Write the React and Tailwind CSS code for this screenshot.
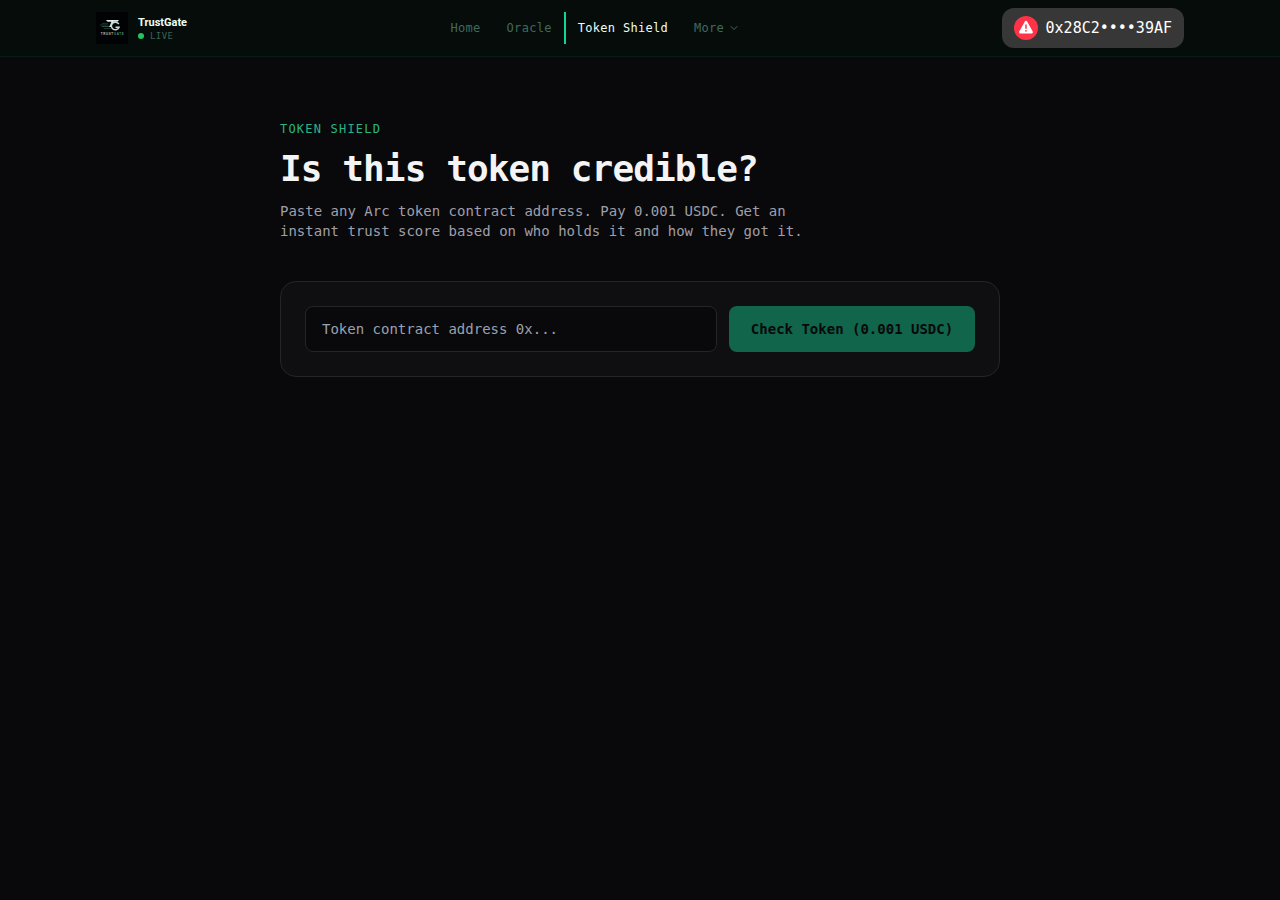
import { useState } from "react";
import { ChevronDown } from "lucide-react";

const NAV_ITEMS = ["Home", "Oracle", "Token Shield"];

function Logo() {
    return (
        <svg viewBox="0 0 32 32" className="w-8 h-8 shrink-0" aria-hidden="true">
            <rect width="32" height="32" fill="#010204" />
            {/* Speed lines */}
            <g stroke="#2f6e60" strokeWidth="0.8" fill="none">
                <path d="M6 11.500h6" opacity="0.5" />
                <path d="M4 13h8" opacity="0.7" />
                <path d="M6 14.500h8" opacity="0.9" />
                <path d="M8 16.500h7" opacity="0.6" />
            </g>
            {/* Monogram */}
            <path d="M10 8h13l-1.500 1.800h-4l-2.300 5.200h-2l2.300-5.200h-4z" fill="#dfe9e6" />
            <path
                d="M22.800 12a4 3.800 0 1 0 .3 3.300h-3.600"
                fill="none"
                stroke="#c9d8d3"
                strokeWidth="1.500"
            />
            <text
                x="16.500"
                y="23"
                textAnchor="middle"
                fontSize="3"
                fontWeight="700"
                letterSpacing="0.6"
                fontFamily="Liberation Sans, sans-serif"
                fill="#b4c4c0"
            >
                TRUST<tspan fill="#3d9c86">GATE</tspan>
            </text>
        </svg>
    );
}

function WalletIcon() {
    return (
        <svg viewBox="0 0 24 24" className="w-6 h-6 shrink-0" aria-hidden="true">
            <circle cx="12" cy="12" r="12" fill="#ff3347" />
            <path
                d="M12 6.200 17.600 16.200H6.400Z"
                fill="#fff"
                stroke="#fff"
                strokeWidth="2.600"
                strokeLinejoin="round"
            />
            <path d="M12 9v3.200" stroke="#ff3347" strokeWidth="1.500" strokeLinecap="round" />
            <circle cx="12" cy="14.800" r="0.9" fill="#ff3347" />
        </svg>
    );
}

function Navbar() {
    const [active, setActive] = useState("Token Shield");

    return (
        <header className="bg-[#050c0a] border-b border-[#051d17]">
            <div className="max-w-6xl h-14 mx-auto px-8 flex items-center justify-between">
                <a href="#home" className="flex items-center gap-[10px]">
                    <Logo />
                    <div className="flex flex-col">
                        <span className="font-['Roboto',sans-serif] text-[11px] leading-4 font-bold text-[#ecfdf5]">
                            TrustGate
                        </span>
                        <span className="flex items-center gap-[6px] text-[9px] leading-[10px] tracking-wider text-[#3c6354]">
                            <span className="w-[6px] h-[6px] rounded-full bg-[#22c55e]" />
                            LIVE
                        </span>
                    </div>
                </a>

                <nav className="flex items-center text-xs tracking-wide">
                    {NAV_ITEMS.map((item) => (
                        <a
                            key={item}
                            href="#"
                            onClick={() => setActive(item)}
                            className={`px-3 py-2 border-l-2 ${active === item
                                ? "border-[#10d49a] text-[#ecfdf5]"
                                : "border-transparent text-[#41695a]"
                                }`}
                        >
                            {item}
                        </a>
                    ))}
                    <button
                        type="button"
                        className="flex items-center gap-1 px-3 py-2 border-l-2 border-transparent tracking-wide text-[#41695a]"
                    >
                        More
                        <ChevronDown className="w-3 h-3" />
                    </button>
                </nav>

                <button
                    type="button"
                    className="h-10 px-3 flex items-center gap-2 rounded-xl bg-[#373737] text-[15px] text-white"
                >
                    <WalletIcon />
                    0x28C2••••39AF
                </button>
            </div>
        </header>
    );
}

export default function App() {
    const [address, setAddress] = useState("");

    return (
        <div className="min-h-screen bg-[#09090b] font-['DejaVu_Sans_Mono',monospace]">
            <Navbar />

            <main className="max-w-3xl mx-auto px-6 py-16">
                <p className="text-xs tracking-widest text-[#2ab584]">TOKEN SHIELD</p>
                <h1 className="mt-3 text-4xl font-bold tracking-tight text-[#f4f4f5]">
                    Is this token credible?
                </h1>
                <p className="mt-3 max-w-[560px] text-sm text-[#9f9fa9]">
                    Paste any Arc token contract address. Pay 0.001 USDC. Get an instant trust
                    score based on who holds it and how they got it.
                </p>

                <form
                    onSubmit={(e) => e.preventDefault()}
                    className="mt-10 p-6 flex gap-3 rounded-2xl border border-[#252528] bg-[#0f0f11]"
                >
                    <input
                        type="text"
                        aria-label="Token contract address"
                        value={address}
                        onChange={(e) => setAddress(e.target.value)}
                        placeholder="Token contract address 0x..."
                        className="flex-1 min-w-0 px-4 py-3 rounded-lg border border-[#252528] bg-[#09090b] text-sm text-[#f4f4f5] placeholder:text-[#99a1af] outline-none"
                    />
                    <button
                        type="submit"
                        disabled={!address}
                        className="min-w-[246px] px-5 py-3 rounded-lg bg-[#10b981] text-sm font-bold text-[#09090b] disabled:bg-[#10654a]"
                    >
                        Check Token (0.001 USDC)
                    </button>
                </form>
            </main>
        </div>
    );
}
